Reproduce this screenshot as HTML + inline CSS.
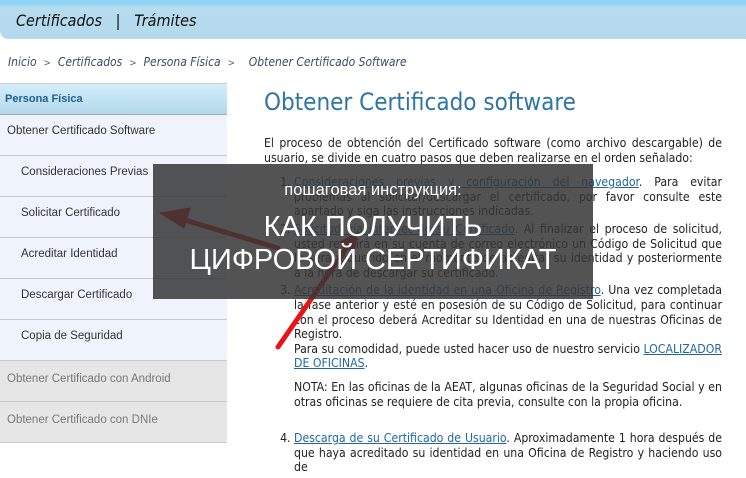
<!DOCTYPE html>
<html><head><meta charset="utf-8"><style>
*{margin:0;padding:0;box-sizing:border-box}
body{width:746px;height:444px;overflow:hidden;background:#fff;font-family:"Liberation Sans",sans-serif;position:relative}
.top{position:absolute;left:0;top:0;width:746px;height:39px;background:linear-gradient(#8fd3f7 0,#8fd3f7 3px,#b6dcee 8px,#b3d9ec 100%);border-bottom-left-radius:8px}
.top span{position:absolute;left:16px;top:11px;font-style:italic;font-size:16px;color:#111;white-space:pre;font-family:"DejaVu Sans Condensed","DejaVu Sans",sans-serif}
.bc{position:absolute;left:8px;top:55px;font-size:12px;font-style:italic;color:#3a4a6a;white-space:pre;font-family:"DejaVu Sans Condensed","DejaVu Sans",sans-serif}
.bc b{font-weight:normal;font-style:normal;font-size:10px;color:#666}
.side{position:absolute;left:0;top:83px;width:227px}
.hd{height:32px;background:linear-gradient(#d4eefa,#b2d8ec);border-top:1px solid #ccc;border-bottom:1px solid #aaa;font-weight:bold;font-size:11px;color:#1f5f94;padding:9px 5px}
.it{height:41px;background:#eef3fc;border-bottom:1px solid #c8c8c8;font-size:11.5px;color:#333;padding:10px 21px}
.it.f{padding-left:7px}
.it.g{background:#e6e6e6;color:#777;padding-left:7px;padding-top:12px}
.main{position:absolute;left:264px;top:89px;width:458px;font-size:12.2px;color:#222;line-height:14.6px;text-align:justify;font-family:"DejaVu Sans Condensed","DejaVu Sans",sans-serif}
h1{font-weight:normal;font-size:24px;line-height:26px;color:#2e75a6;margin-bottom:21px;text-align:left}
a{color:#1f67a4;text-decoration:underline}
ol{padding-left:30px;margin-top:10px}
li{margin-bottom:3px}
li.n3{margin-bottom:22px}
.nota{margin-top:9px}
.ov{position:absolute;left:153px;top:164px;width:440px;height:135px;background:rgba(55,55,55,.86);color:#fff;text-align:center}
.ov .s{font-size:16.5px;margin-top:17px}
.ov .b{font-size:29px;line-height:33px;margin-top:11px}
svg{position:absolute;left:0;top:0}
</style></head><body>
<div class="top"><span>Certificados   |   Trámites</span></div>
<div class="bc">Inicio  <b>&gt;</b>  Certificados  <b>&gt;</b>  Persona Física  <b>&gt;</b>    Obtener Certificado Software</div>
<div class="side">
<div class="hd">Persona Física</div>
<div class="it f">Obtener Certificado Software</div>
<div class="it">Consideraciones Previas</div>
<div class="it">Solicitar Certificado</div>
<div class="it">Acreditar Identidad</div>
<div class="it">Descargar Certificado</div>
<div class="it">Copia de Seguridad</div>
<div class="it g">Obtener Certificado con Android</div>
<div class="it g">Obtener Certificado con DNIe</div>
</div>
<div class="main">
<h1>Obtener Certificado software</h1>
<p>El proceso de obtención del Certificado software (como archivo descargable) de usuario, se divide en cuatro pasos que deben realizarse en el orden señalado:</p>
<ol>
<li><a>Consideraciones previas y configuración del navegador</a>. Para evitar problemas al solicitar/descargar el certificado, por favor consulte este apartado y siga las instrucciones indicadas.</li>
<li><a>Solicitud vía internet de su Certificado</a>. Al finalizar el proceso de solicitud, usted recibirá en su cuenta de correo electrónico un Código de Solicitud que le será requerido en el momento de acreditar su identidad y posteriormente a la hora de descargar su certificado.</li>
<li class="n3"><a>Acreditación de la identidad en una Oficina de Registro</a>. Una vez completada la fase anterior y esté en posesión de su Código de Solicitud, para continuar con el proceso deberá Acreditar su Identidad en una de nuestras Oficinas de Registro.<br>Para su comodidad, puede usted hacer uso de nuestro servicio <a>LOCALIZADOR DE OFICINAS</a>.<p class="nota">NOTA: En las oficinas de la AEAT, algunas oficinas de la Seguridad Social y en otras oficinas se requiere de cita previa, consulte con la propia oficina.</p></li>
<li><a>Descarga de su Certificado de Usuario</a>. Aproximadamente 1 hora después de que haya acreditado su identidad en una Oficina de Registro y haciendo uso de</li>
</ol>
</div>
<svg width="746" height="444">
<g stroke="#e8141a" stroke-width="5" stroke-linecap="round" fill="#e8141a">
<line x1="278" y1="347" x2="352" y2="240"/>
<polygon points="358,232 340,242 354,252" stroke-width="1"/>
<line x1="278" y1="248" x2="178" y2="218"/>
<polygon points="160,213 190,208 184,228" stroke-width="1"/>
</g>
</svg>
<div class="ov"><div class="s">пошаговая инструкция:</div><div class="b">КАК ПОЛУЧИТЬ<br>ЦИФРОВОЙ СЕРТИФИКАТ</div></div>
</body></html>
